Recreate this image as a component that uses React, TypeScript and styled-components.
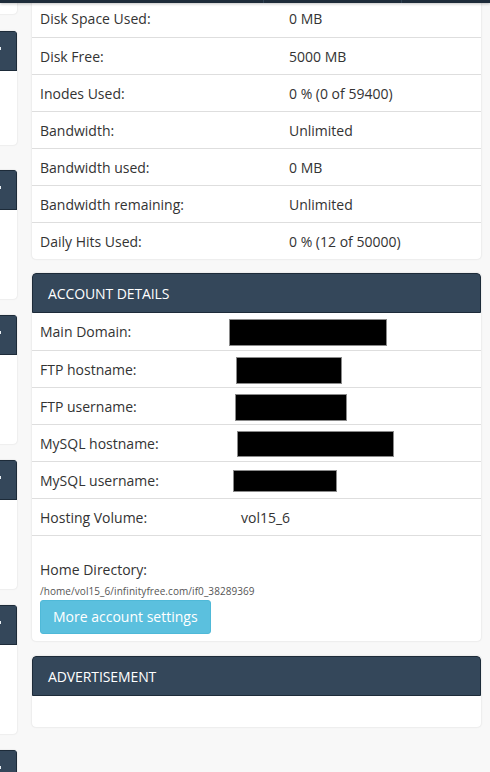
import React from "react";
import styled, { createGlobalStyle } from "styled-components";

const GlobalStyle = createGlobalStyle`
  html, body { margin: 0; padding: 0; }
  body {
    background: #f8f8f8;
    font-family: "Open Sans", "Liberation Sans", sans-serif;
    font-size: 14px;
    color: #333;
    overflow: hidden;
  }
`;

const TopBar = styled.div`
  position: fixed;
  top: 0;
  left: 0;
  right: 0;
  height: 3px;
  background: #1e2c3a;
  box-shadow: 0 1px 3px rgba(0, 0, 0, 0.25);
  display: flex;
  z-index: 10;
`;

const TopItem = styled.div<{ $w: number }>`
  width: ${(p) => p.$w}px;
  border-right: 1px solid #2f4152;
`;

const Page = styled.div`
  display: flex;
  align-items: flex-start;
  gap: 15px;
`;

const Sidebar = styled.div`
  flex: 0 0 240px;
  margin-left: -223px;
  display: flex;
  flex-direction: column;
  margin-top: -60px;
`;

const SideCard = styled.div<{ $after: number }>`
  background: #fff;
  border-radius: 4px;
  box-shadow: 0 0 2px rgba(0, 0, 0, 0.14);
  margin-bottom: ${(p) => p.$after}px;
  overflow: hidden;
`;

const SideHead = styled.div`
  height: 40px;
  box-sizing: border-box;
  background: #34475a;
  border: 1px solid #1d2b39;
  display: flex;
  justify-content: flex-end;
  align-items: flex-start;
  padding: 15px 15px 0 0;
`;

const SideMark = styled.span`
  width: 2px;
  height: 3px;
  background: #e8eef3;
`;

const SideBody = styled.div<{ $h: number }>`
  height: ${(p) => p.$h}px;
`;

const Main = styled.div`
  flex: 0 0 449px;
  display: flex;
  flex-direction: column;
  gap: 15px;
`;

const Card = styled.div`
  background: #fff;
  border-radius: 4px;
  box-shadow: 0 0 2px rgba(0, 0, 0, 0.16);
  overflow: hidden;
`;

const TopCard = styled(Card)`
  border-top-left-radius: 0;
  border-top-right-radius: 0;
  margin-bottom: -1px;
`;

const CardHead = styled.div`
  height: 40px;
  box-sizing: border-box;
  background: #34475a;
  border: 1px solid #1d2b39;
  border-radius: 4px 4px 0 0;
  color: #fff;
  font-size: 14px;
  letter-spacing: -0.1px;
  display: flex;
  align-items: center;
  padding-left: 15px;
`;

const Row = styled.div<{ $label: number }>`
  display: grid;
  grid-template-columns: ${(p) => p.$label}px 1fr;
  align-items: center;
  height: 37px;
  box-sizing: border-box;
  padding: 0 8px;
  & + & {
    border-top: 1px solid #dedede;
  }
`;

const Label = styled.div`
  white-space: nowrap;
`;

const Value = styled.div`
  white-space: nowrap;
  display: flex;
  align-items: center;
`;

const Redact = styled.span<{ $w: number; $h: number; $x: number }>`
  display: inline-block;
  box-sizing: border-box;
  width: ${(p) => p.$w}px;
  height: ${(p) => p.$h}px;
  margin-left: ${(p) => p.$x}px;
  margin-top: 2px;
  background: #000;
  border: 1px solid #8a8a8a;
`;

const HomeSection = styled.div`
  border-top: 1px solid #dedede;
  padding: 24px 8px 7px;
`;

const HomeLabel = styled.div`
  line-height: 20px;
  margin-bottom: 4px;
`;

const HomePath = styled.div`
  font-size: 10px;
  letter-spacing: 0.07px;
  line-height: 14px;
  color: #555;
  margin-bottom: 2px;
`;

const InfoButton = styled.button`
  font-family: "Open Sans", "Liberation Sans", sans-serif;
  font-size: 14px;
  line-height: 20px;
  color: #fff;
  background: #5bc0de;
  border: 1px solid #4fb9d8;
  border-radius: 3px;
  padding: 6px 12px;
  cursor: pointer;
`;

const AdBody = styled.div`
  height: 31px;
`;

const stats: [string, string][] = [
  ["Disk Space Used:", "0 MB"],
  ["Disk Free:", "5000 MB"],
  ["Inodes Used:", "0 % (0 of 59400)"],
  ["Bandwidth:", "Unlimited"],
  ["Bandwidth used:", "0 MB"],
  ["Bandwidth remaining:", "Unlimited"],
  ["Daily Hits Used:", "0 % (12 of 50000)"],
];

const redacted: { label: string; w: number; h: number; x: number }[] = [
  { label: "Main Domain:", w: 158, h: 27, x: -12 },
  { label: "FTP hostname:", w: 106, h: 27, x: -5 },
  { label: "FTP username:", w: 112, h: 27, x: -6 },
  { label: "MySQL hostname:", w: 157, h: 26, x: -4 },
  { label: "MySQL username:", w: 104, h: 22, x: -8 },
];

const sideCards = [
  { head: false, body: 74, after: 17 },
  { head: true, body: 74, after: 25 },
  { head: true, body: 89, after: 16 },
  { head: true, body: 89, after: 16 },
  { head: true, body: 89, after: 16 },
  { head: true, body: 89, after: 16 },
  { head: true, body: 89, after: 16 },
];

export default function App() {
  return (
    <>
      <GlobalStyle />
      <TopBar>
        <TopItem $w={263} />
        <TopItem $w={137} />
      </TopBar>
      <Page>
        <Sidebar>
          {sideCards.map((c, i) => (
            <SideCard key={i} $after={c.after}>
              {c.head && (
                <SideHead>
                  <SideMark />
                </SideHead>
              )}
              <SideBody $h={c.body} />
            </SideCard>
          ))}
        </Sidebar>
        <Main>
          <TopCard>
            {stats.map(([l, v]) => (
              <Row key={l} $label={249}>
                <Label>{l}</Label>
                <Value>{v}</Value>
              </Row>
            ))}
          </TopCard>
          <Card>
            <CardHead>ACCOUNT DETAILS</CardHead>
            {redacted.map((r) => (
              <Row key={r.label} $label={201}>
                <Label>{r.label}</Label>
                <Value>
                  <Redact $w={r.w} $h={r.h} $x={r.x} />
                </Value>
              </Row>
            ))}
            <Row $label={201}>
              <Label>Hosting Volume:</Label>
              <Value>vol15_6</Value>
            </Row>
            <HomeSection>
              <HomeLabel>Home Directory:</HomeLabel>
              <HomePath>/home/vol15_6/infinityfree.com/if0_38289369</HomePath>
              <InfoButton>More account settings</InfoButton>
            </HomeSection>
          </Card>
          <Card>
            <CardHead>ADVERTISEMENT</CardHead>
            <AdBody />
          </Card>
        </Main>
      </Page>
    </>
  );
}
